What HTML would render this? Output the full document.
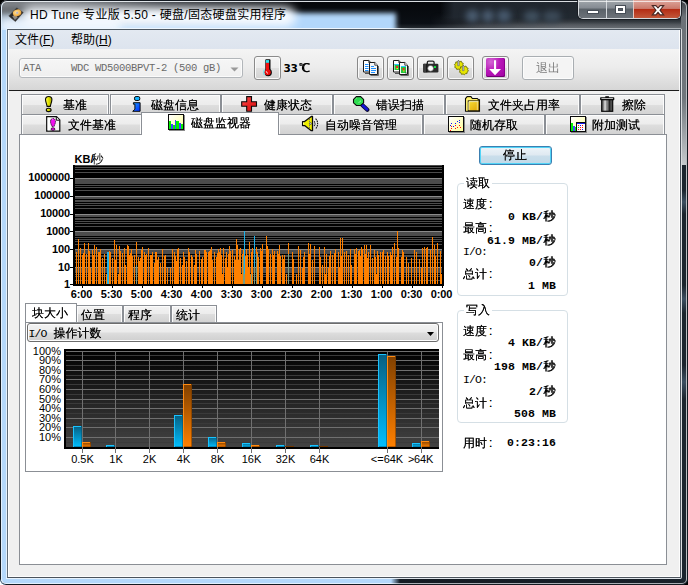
<!DOCTYPE html>
<html lang="zh-CN">
<head>
<meta charset="utf-8">
<title>HD Tune 专业版 5.50 - 硬盘/固态硬盘实用程序</title>
<style>
html,body{margin:0;padding:0;}
body{width:688px;height:585px;overflow:hidden;position:relative;background:#000;
 font-family:"Liberation Sans","Noto Sans CJK SC",sans-serif;font-size:12px;color:#000;}
.abs{position:absolute;}
.cjk{font-family:"Liberation Sans","WenQuanYi Zen Hei",sans-serif;font-size:12px;line-height:14px;white-space:nowrap;text-shadow:0 0 0 rgba(0,0,0,.85);}
.yh{font-family:"Liberation Sans","Noto Sans CJK SC",sans-serif;font-size:12px;line-height:14px;white-space:nowrap;}
.mono{font-family:"Liberation Mono","WenQuanYi Zen Hei",monospace;font-size:12px;line-height:14px;white-space:pre;}
/* ---- window frame ---- */
#frame{left:0;top:0;width:688px;height:585px;border-radius:7px 7px 6px 6px;overflow:hidden;background:#0b0f15;}
#client{left:8px;top:30px;width:672px;height:547px;background:#f0f0f0;}
/* ---- tabs ---- */
.tab{position:absolute;box-sizing:border-box;border:1px solid #8b8f95;border-bottom:none;
 background:linear-gradient(#f3f3f3 0%,#ececec 48%,#dedede 52%,#d2d2d2 100%);
 box-shadow:inset 1px 1px 0 #fcfcfc, inset -1px 0 0 #fcfcfc;}
.tab .ic{position:absolute;top:1px;}
.tab .tx{position:absolute;top:3px;}
.tbtn{position:absolute;box-sizing:border-box;width:27px;height:24px;top:56px;border:1px solid #8a8a8a;border-radius:3px;
 background:linear-gradient(#f4f4f4 0%,#ececec 48%,#dfdfdf 52%,#d3d3d3 100%);box-shadow:inset 0 0 0 1px #fafafa;}
.lab{position:absolute;font-family:"Liberation Sans","WenQuanYi Zen Hei",sans-serif;font-size:12px;line-height:14px;white-space:nowrap;text-shadow:0 0 0 rgba(0,0,0,.85);}
.val{position:absolute;font-family:"Liberation Mono","Noto Sans CJK SC",monospace;font-weight:bold;font-size:11.5px;line-height:14px;white-space:pre;text-align:right;letter-spacing:0.1px;}
.val b{font-family:"WenQuanYi Zen Hei",sans-serif;font-size:12px;letter-spacing:1px;font-weight:normal;text-shadow:1px 0 0 #000;position:relative;top:0px;}
.ax{position:absolute;font-family:"Liberation Sans",sans-serif;font-weight:bold;font-size:11px;line-height:12px;white-space:nowrap;letter-spacing:-.15px;}
.ax2{position:absolute;font-family:"Liberation Sans",sans-serif;font-size:11px;line-height:11px;white-space:nowrap;}
.grp{position:absolute;box-sizing:border-box;border:1px solid #d5dfe5;border-radius:4px;}
</style>
</head>
<body>
<div class="abs" style="left:0;top:577px;width:8px;height:8px;background:#fff;"></div>
<div id="frame" class="abs">
  <!-- title bar backdrop -->
  <div class="abs" id="tb-dark" style="left:0;top:0;width:688px;height:30px;background:linear-gradient(#05070a 0%,#0b0f15 78%,#23282e 92%,#3a3f45 100%);"></div>
  <div class="abs" style="left:430px;top:12px;width:258px;height:17px;background:linear-gradient(180deg,rgba(110,115,121,0) 0,rgba(106,111,117,.5) 50%,rgba(110,115,121,.95) 100%);-webkit-mask-image:linear-gradient(90deg,transparent 0,rgba(0,0,0,.6) 50px,#000 130px);"></div>
  <div class="abs" style="left:440px;top:2px;width:241px;height:22px;background:linear-gradient(90deg,rgba(34,41,49,0) 0,rgba(34,41,49,.95) 14px,rgba(34,41,49,.95) 100%);-webkit-mask-image:linear-gradient(180deg,#000 0,#000 70%,transparent 100%);"></div>
  <div class="abs" style="left:466px;top:10px;width:13px;height:12px;border-radius:5px;background:#4a5c70;filter:blur(3px);"></div>
  <div class="abs" style="left:482px;top:10px;width:12px;height:12px;border-radius:5px;background:#4a5c70;filter:blur(3px);"></div>
  <div class="abs" style="left:497px;top:10px;width:14px;height:12px;border-radius:5px;background:#46586c;filter:blur(3px);"></div>
  <div class="abs" style="left:524px;top:11px;width:16px;height:11px;border-radius:5px;background:#40505f;filter:blur(3px);"></div>
  <div class="abs" style="left:543px;top:11px;width:18px;height:11px;border-radius:5px;background:#3c4a58;filter:blur(3px);"></div>
  <div class="abs" id="tb-blue" style="left:-12px;top:13px;width:408px;height:24px;background:#b2d7fb;filter:blur(2.5px);"></div>
  <div class="abs" id="tb-gray" style="left:-6px;top:-6px;width:300px;height:36px;background:linear-gradient(90deg,#7d8186 0,#75797e 25%,rgba(70,74,80,.75) 55%,rgba(20,24,30,0) 100%);-webkit-mask-image:linear-gradient(180deg,#000 0,#000 30%,rgba(0,0,0,.7) 55%,transparent 92%);mask-image:linear-gradient(180deg,#000 0,#000 30%,rgba(0,0,0,.7) 55%,transparent 92%);filter:blur(2px);"></div>
  <div class="abs" id="tb-glow" style="left:22px;top:7px;width:274px;height:20px;border-radius:10px;background:#f6faff;filter:blur(5px);"></div>
  <div class="abs" id="tb-glow2" style="left:0px;top:18px;width:120px;height:14px;background:#f3f8fe;filter:blur(4px);opacity:.9"></div>
  <!-- left fill -->
  <div class="abs" style="left:0;top:30px;width:7px;height:555px;background:#b4d8fb;"></div>
  <!-- bottom fill -->
  <div class="abs" style="left:0;top:578px;width:688px;height:7px;background:linear-gradient(90deg,#b4d8fb 0,#b4d8fb 391px,#141b23 400px,#19212a 100%);"></div>
  <!-- right fill -->
  <div class="abs" style="left:681px;top:20px;width:7px;height:565px;background:#1b242d;"></div>
  <div class="abs" style="left:681px;top:2px;width:7px;height:163px;background:linear-gradient(180deg,#3c4147 0,#6b7177 14px,#70767c 96px,#9da2a7 131px,#c5c9cc 163px);"></div>
  <div class="abs" style="left:682px;top:190px;width:4px;height:24px;background:linear-gradient(180deg,rgba(70,90,110,0),rgba(70,90,110,.8) 50%,rgba(70,90,110,0));"></div>
  <div class="abs" style="left:682px;top:285px;width:4px;height:28px;background:linear-gradient(180deg,rgba(70,90,110,0),rgba(70,90,110,.8) 50%,rgba(70,90,110,0));"></div>
  <div class="abs" style="left:682px;top:365px;width:4px;height:34px;background:linear-gradient(180deg,rgba(70,90,110,0),rgba(70,90,110,.8) 50%,rgba(70,90,110,0));"></div>
  <!-- rings -->
  <div class="abs" style="left:0;top:0;width:688px;height:585px;box-sizing:border-box;border:1px solid #141a21;border-radius:7px 7px 6px 6px;"></div>
  <div class="abs" style="left:1px;top:1px;width:686px;height:583px;box-sizing:border-box;border:1px solid;border-color:rgba(236,240,244,.92) #b9bdc1 #a8adb3 #e2f0fd;border-radius:6px 6px 5px 5px;"></div>
  <div class="abs" style="left:1px;top:560px;width:400px;height:24px;box-sizing:border-box;border:1px solid #e2f0fd;border-top:none;border-right:none;border-radius:0 0 0 5px;-webkit-mask-image:linear-gradient(90deg,#000 0,#000 390px,transparent 399px);"></div>
  <div class="abs" style="left:6px;top:28px;width:676px;height:551px;box-sizing:border-box;border:1px solid;border-color:transparent #d9dcdf #dfe4e9 #e6f2fd;border-radius:2px;"></div>
  <div class="abs" style="left:6px;top:560px;width:394px;height:19px;box-sizing:border-box;border-bottom:1px solid #e6f2fd;-webkit-mask-image:linear-gradient(90deg,#000 0,#000 385px,transparent 394px);"></div>
  <!-- bottom of title bar highlight -->
  <div class="abs" style="left:7px;top:28px;width:674px;height:1px;background:linear-gradient(90deg,#eef6fe 0,#eef6fe 57%,#aab0b6 60%,#aab0b6 100%);"></div>
  <div class="abs" style="left:7px;top:29px;width:674px;height:549px;box-sizing:border-box;border:1px solid;border-color:#4f5963 #4d555e #4b535c #5f6b76;"></div>
  <!-- title icon + text -->
  <svg class="abs" style="left:8px;top:6px" width="17" height="17" viewBox="0 0 17 17">
    <defs><radialGradient id="pl" cx=".45" cy=".4" r=".7"><stop offset="0" stop-color="#ffe8a8"/><stop offset=".55" stop-color="#f5b955"/><stop offset="1" stop-color="#d98f2e"/></radialGradient></defs>
    <polygon points="8.700,1.900 15.200,6.500 7.400,15.500 .8,10.000" fill="#2b2a29" stroke="#3f3e3c" stroke-width=".6" stroke-linejoin="round"/>
    <polygon points="4.200,10.200 7.600,8.600 9.700,11.600 6.900,14.000" fill="#8e8a84"/>
    <ellipse cx="9.100" cy="6.900" rx="4.300" ry="3.300" fill="url(#pl)" transform="rotate(-18 9.100 6.900)"/>
    <circle cx="9.200" cy="6.800" r="1.150" fill="#b9b3c4"/>
  </svg>
  <div class="abs yh" id="title" style="left:30px;top:8px;font-size:12px;line-height:14px;color:#000;letter-spacing:.3px;">HD Tune 专业版 5.50 - 硬盘/固态硬盘实用程序</div>
  <!-- caption buttons -->
  <div class="abs" id="capbtns" style="left:578px;top:0;width:103px;height:19px;box-sizing:border-box;border:1px solid #d5d9dd;border-top:none;border-radius:0 0 5px 5px;overflow:hidden;box-shadow:0 0 0 1px rgba(20,24,30,.8);">
    <div class="abs" style="left:0;top:0;width:27px;height:18px;background:linear-gradient(#a2a8ad 0,#858b92 45%,#5a6168 50%,#6c7279 100%);border-right:1px solid #d5d9dd;"></div>
    <div class="abs" style="left:28px;top:0;width:26px;height:18px;background:linear-gradient(#a2a8ad 0,#858b92 45%,#5a6168 50%,#6c7279 100%);border-right:1px solid #e5c4bd;"></div>
    <div class="abs" style="left:55px;top:0;width:46px;height:18px;background:linear-gradient(#dea79d 0,#cb7a6c 47%,#b42c14 52%,#c2573a 100%);"></div>
    <div class="abs" style="left:0;top:1px;width:101px;height:1px;background:rgba(255,255,255,.7);"></div>
    <!-- glyphs -->
    <div class="abs" style="left:9px;top:11px;width:10px;height:2px;background:#fff;box-shadow:0 0 0 1px #474e57;"></div>
    <div class="abs" style="left:37px;top:6px;width:5px;height:3px;border:2px solid #fff;box-shadow:0 0 0 1px #474e57, inset 0 0 0 1px #474e57;"></div>
    <svg class="abs" style="left:71px;top:4px" width="16" height="13" viewBox="0 0 16 13"><path d="M2.300 1.600 L5.900 1.600 L8 4.000 L10.100 1.600 L13.700 1.600 L10 6.200 L13.700 10.900 L10.100 10.900 L8 8.300 L5.900 10.900 L2.300 10.900 L6 6.200 Z" fill="#fff" stroke="#4a2824" stroke-width="1.100"/></svg>
  </div>
</div>

<div id="client" class="abs">
  <!-- menu bar -->
  <div class="abs" style="left:0;top:0;width:672px;height:19px;background:linear-gradient(#e3e9f1,#dde4ee);"></div>
  <div class="abs yh" style="left:7px;top:3px;">文件(<u>F</u>)</div>
  <div class="abs yh" style="left:63px;top:3px;">帮助(<u>H</u>)</div>
  <!-- toolbar -->
  <div class="abs" style="left:0;top:19px;width:672px;height:41px;background:linear-gradient(#f4f4f4 0,#ececec 45%,#d6d6d6 100%);"></div>
  <div class="abs" style="left:0;top:60px;width:672px;height:1px;background:#1c1c1c;"></div>
  <div class="abs" style="left:0;top:0;width:672px;height:547px;box-sizing:border-box;border:1px solid rgba(255,255,255,.85);border-top:none;"></div>
</div>

<!-- ============ toolbar widgets (page coords) ============ -->
<div class="abs" style="left:19px;top:58px;width:224px;height:20px;box-sizing:border-box;border:1px solid #b2b6ba;border-radius:3px;background:linear-gradient(#f6f6f6,#efefef);box-shadow:inset 0 0 0 1px #fbfbfb;"></div>
<div class="abs mono" style="left:23px;top:61px;color:#6a6a6a;letter-spacing:-.3px;font-size:10.5px;">ATA     WDC WD5000BPVT-2 (500 gB)</div>
<svg class="abs" style="left:230px;top:67px" width="9" height="5"><polygon points="0.5,0.5 8.5,0.5 4.5,4.5" fill="#9a9a9a"/></svg>

<div class="tbtn" style="left:254px;"></div>
<svg class="abs" style="left:262px;top:58px" width="12" height="20" viewBox="0 0 12 20">
  <rect x="3.300" y="1.200" width="5.200" height="12.500" rx=".8" fill="#0a0a0a"/>
  <circle cx="6.200" cy="14.500" r="3.700" fill="#0a0a0a"/>
  <path d="M2.600 11.600q-1.700 2.700 0 5.400" stroke="#7fdde6" stroke-width="1.500" fill="none"/>
  <rect x="3.900" y="2.100" width="3.200" height="2.800" fill="#2fe2f0"/>
  <rect x="3.900" y="4.900" width="3.200" height="8.500" fill="#f21010"/>
  <circle cx="5.700" cy="14.300" r="3.050" fill="#ea0c0c"/>
  <path d="M4.300 13.300q.1 1.600 1.600 2" stroke="#fff" stroke-width=".9" fill="none"/>
</svg>
<div class="abs" style="left:283.500px;top:61px;font-weight:bold;font-size:10.5px;line-height:14px;font-family:'DejaVu Sans','WenQuanYi Zen Hei',sans-serif;letter-spacing:-.3px;white-space:nowrap;">33<span style="font-family:'WenQuanYi Zen Hei',sans-serif;font-weight:normal;font-size:12px;text-shadow:1px 0 0 #000;letter-spacing:0;margin-left:1px;position:relative;top:-.500px">℃</span></div>

<div class="tbtn" style="left:357px;"></div>
<svg class="abs" style="left:362px;top:59px" width="18" height="18" viewBox="0 0 18 18">
  <path d="M1.500 1.500h5.300l2.200 2.200v9.300h-7.500z" fill="#fff" stroke="#1a1a1a" stroke-width="1"/>
  <path d="M6.800 1.500v2.200h2.200" fill="none" stroke="#1a1a1a" stroke-width=".8"/>
  <path d="M3 5.500h3.500M3 7.500h3.500M3 9.500h3.500M3 11.500h3.500" stroke="#1e90ff" stroke-width="1"/>
  <path d="M9 14.500h-6" stroke="#555" stroke-width="1"/>
  <path d="M7.500 3.500h5.300l2.700 2.700v9.300h-8z" fill="#f6f6f6" stroke="#1a1a1a" stroke-width="1"/>
  <path d="M12.800 3.500v2.700h2.700" fill="#fff" stroke="#1a1a1a" stroke-width=".8"/>
  <path d="M9 7.500h3M9 9.500h5M9 11.500h5M9 13.500h4" stroke="#1e90ff" stroke-width="1"/>
  <path d="M16.500 7v9.500h-8" stroke="#6a6a6a" stroke-width="1" fill="none"/>
</svg>
<div class="tbtn" style="left:387px;"></div>
<svg class="abs" style="left:392px;top:59px" width="18" height="18" viewBox="0 0 18 18">
  <path d="M1.500 1.500h5.300l2.200 2.200v9.300h-7.500z" fill="#fff" stroke="#1a1a1a" stroke-width="1"/>
  <path d="M6.800 1.500v2.200h2.200" fill="none" stroke="#1a1a1a" stroke-width=".8"/>
  <rect x="2.500" y="5" width="4.500" height="6" fill="#22c83c"/><rect x="2.500" y="5" width="4.500" height="1" fill="#29c5ff"/><rect x="4" y="7" width="2" height="2" fill="#f03020"/><rect x="4.500" y="9" width="1.500" height="1" fill="#ffe020"/>
  <path d="M9 14.500h-6" stroke="#555" stroke-width="1"/>
  <path d="M7.500 3.500h5.300l2.700 2.700v9.300h-8z" fill="#f6f6f6" stroke="#1a1a1a" stroke-width="1"/>
  <path d="M12.800 3.500v2.700h2.700" fill="#fff" stroke="#1a1a1a" stroke-width=".8"/>
  <rect x="9" y="7" width="5" height="7" fill="#22c83c"/><rect x="9" y="7" width="5" height="1" fill="#29c5ff"/><rect x="10.500" y="9" width="2" height="2.500" fill="#f03020"/><rect x="11" y="11.500" width="1.500" height="1" fill="#ffe020"/><rect x="13.500" y="13.500" width="1" height="1" fill="#111"/>
  <path d="M16.500 7v9.500h-8" stroke="#6a6a6a" stroke-width="1" fill="none"/>
</svg>
<div class="tbtn" style="left:417px;"></div>
<svg class="abs" style="left:422px;top:60px" width="18" height="14" viewBox="0 0 18 14">
  <path d="M5.300 4V2.500c0-.8.600-1.400 1.400-1.400h4c.8 0 1.400.6 1.400 1.400V4" fill="#e8e8e8" stroke="#222" stroke-width="1.300"/>
  <rect x="1" y="3.700" width="15.400" height="8.700" rx="1.200" fill="#2b2b2b"/>
  <rect x="1" y="3.700" width="3.300" height="8.700" rx="1" fill="#3c3c3c"/>
  <rect x="4.300" y="3.700" width="1" height="8.700" fill="#111"/>
  <circle cx="8.600" cy="8.300" r="2.900" fill="#fdfdfd" stroke="#555" stroke-width=".6"/>
  <rect x="12" y="6" width="2" height="2" rx=".5" fill="#10f040"/>
</svg>
<div class="tbtn" style="left:447px;"></div>
<svg class="abs" style="left:452px;top:59px" width="18" height="18" viewBox="0 0 20 20">
  <g fill="#e6e600" stroke="#6a6a00" stroke-width=".9">
   <path d="M7.100 1.800l1.500 1.100 1.700-.5.600 1.700 1.700.7-.6 1.700 1 1.500-1.500 1-.1 1.800-1.800 0-1.100 1.400-1.500-1-1.700.5-.6-1.700-1.700-.7.600-1.700-1-1.500 1.500-1 .1-1.800 1.800 0z"/>
   <path d="M12.400 7.200l1.500 1.100 1.700-.5.600 1.700 1.700.7-.6 1.700 1 1.500-1.500 1-.1 1.800-1.800 0-1.100 1.400-1.500-1-1.700.5-.6-1.700-1.700-.7.600-1.700-1-1.500 1.500-1 .1-1.800 1.800 0z"/>
  </g>
  <path d="M6.300 7.500V2.800l.9-1.600.9 1.600v4.700z" fill="#b8b8c8" stroke="#555" stroke-width=".5"/>
  <path d="M11.600 13V8.300l.9-1.600.9 1.600V13z" fill="#b8b8c8" stroke="#555" stroke-width=".5"/>
</svg>
<div class="tbtn" style="left:482px;"></div>
<div class="abs" style="left:486px;top:58px;width:19px;height:19px;border-radius:2px;background:radial-gradient(circle at 25% 20%,#d468d4 0,#b818b8 45%,#a000a2 100%);box-shadow:inset 0 -1px 0 #6e0070, inset -1px 0 0 #8a008c;"></div>
<svg class="abs" style="left:486px;top:58px" width="19" height="19" viewBox="0 0 19 19"><path d="M8 2.200h2.100v8.800h4.900L9.050 17.200 3.100 11h4.900z" fill="#fff"/></svg>

<div class="abs" style="left:522px;top:56px;width:52px;height:24px;box-sizing:border-box;border:1px solid #a9aeb2;border-radius:3px;background:#f4f4f4;box-shadow:inset 0 0 0 1px #fcfcfc;"></div>
<div class="abs cjk" style="left:536px;top:61px;color:#7c7c7c;text-shadow:none;">退出</div>

<!-- ============ main tab control ============ -->
<!-- pane -->
<div class="abs" style="left:19px;top:134px;width:648px;height:431px;box-sizing:border-box;border:1px solid #8b8f95;background:#fff;"></div>
<!-- row 1 -->
<div class="tab" style="left:21px;top:94px;width:88px;height:21px;"></div>
<div class="tab" style="left:110px;top:94px;width:111px;height:21px;"></div>
<div class="tab" style="left:221px;top:94px;width:112px;height:21px;"></div>
<div class="tab" style="left:333px;top:94px;width:112px;height:21px;"></div>
<div class="tab" style="left:445px;top:94px;width:135px;height:21px;"></div>
<div class="tab" style="left:580px;top:94px;width:85px;height:21px;"></div>
<!-- row 2 -->
<div class="tab" style="left:21px;top:114px;width:121px;height:20px;"></div>
<div class="tab" style="left:278px;top:114px;width:145px;height:20px;"></div>
<div class="tab" style="left:423px;top:114px;width:122px;height:20px;"></div>
<div class="tab" style="left:545px;top:114px;width:120px;height:20px;"></div>
<!-- selected -->
<div class="abs" style="left:141px;top:112px;width:138px;height:23px;box-sizing:border-box;border:1px solid #8b8f95;border-bottom:none;background:#fff;"></div>

<!-- tab labels -->
<div class="abs cjk" style="left:63px;top:98px;">基准</div>
<div class="abs cjk" style="left:151px;top:98px;">磁盘信息</div>
<div class="abs cjk" style="left:264px;top:98px;">健康状态</div>
<div class="abs cjk" style="left:376px;top:98px;">错误扫描</div>
<div class="abs cjk" style="left:488px;top:98px;">文件夹占用率</div>
<div class="abs cjk" style="left:622px;top:98px;">擦除</div>
<div class="abs cjk" style="left:68px;top:118px;">文件基准</div>
<div class="abs cjk" style="left:191px;top:116px;">磁盘监视器</div>
<div class="abs cjk" style="left:325px;top:118px;">自动噪音管理</div>
<div class="abs cjk" style="left:470px;top:118px;">随机存取</div>
<div class="abs cjk" style="left:592px;top:118px;">附加测试</div>

<!-- tab icons -->
<!-- benchmark: yellow ! -->
<svg class="abs" style="left:42px;top:95px" width="14" height="18" viewBox="0 0 14 18">
  <defs><linearGradient id="yl" x1="0" x2="1"><stop offset="0" stop-color="#ffff66"/><stop offset=".45" stop-color="#e6e600"/><stop offset="1" stop-color="#a8a800"/></linearGradient></defs>
  <path d="M3.500 4.600c0-2.200 1.400-3.100 3.200-3.100s3.200.9 3.200 3.100c0 2.600-1.300 4.300-1.600 6.800h-3.200c-.3-2.500-1.600-4.200-1.600-6.800z" fill="url(#yl)" stroke="#0a0a00" stroke-width="1.100"/>
  <ellipse cx="6.700" cy="14.900" rx="2.400" ry="1.700" fill="url(#yl)" stroke="#0a0a00" stroke-width="1.100"/>
</svg>
<!-- info: blue i -->
<svg class="abs" style="left:130px;top:95px" width="14" height="18" viewBox="0 0 14 18">
  <defs><linearGradient id="bl" x1="0" y1="0" x2="1" y2="1"><stop offset="0" stop-color="#1aa0ff"/><stop offset="1" stop-color="#0028ff"/></linearGradient></defs>
  <rect x="4.500" y="1.500" width="5.300" height="4" rx="1.600" fill="#14b4ff" stroke="#0a0a0a" stroke-width="1"/>
  <path d="M3.400 7.700H10.100V16.300H2.700L4.900 14.300V9.200H3.400Z" fill="url(#bl)" stroke="#0a0a0a" stroke-width="1"/>
</svg>
<!-- health: red cross -->
<svg class="abs" style="left:241px;top:96px" width="17" height="17" viewBox="0 0 17 17">
  <defs><linearGradient id="rd" x1="0" y1="0" x2="1" y2="1"><stop offset="0" stop-color="#ff5a5a"/><stop offset=".5" stop-color="#ea2424"/><stop offset="1" stop-color="#d01414"/></linearGradient></defs>
  <path d="M5.700 .6h4.800v5.100h5.000v4.500h-5.000v5.100h-4.800v-5.100h-5.000v-4.500h5.000z" fill="url(#rd)" stroke="#0a0a0a" stroke-width="1.100"/>
</svg>
<!-- error scan: magnifier -->
<svg class="abs" style="left:352px;top:95px" width="18" height="18" viewBox="0 0 18 18">
  <path d="M10.500 10.300 L15.300 14.800" stroke="#0a0a30" stroke-width="4.200" stroke-linecap="round"/>
  <path d="M10.300 10.000 L15.000 14.400" stroke="#1414d8" stroke-width="2.600" stroke-linecap="round"/>
  <polygon points="4.400,1.600 8.600,1.600 11.600,4.400 11.600,7.800 8.600,10.500 4.400,10.500 1.500,7.800 1.500,4.400" fill="#2fdc50" stroke="#0a0a0a" stroke-width="1.100"/>
  <path d="M3.700 3.900l1.100-1.100M6.600 7.900l2.400-2.400" stroke="#d8ffd8" stroke-width=".9" stroke-dasharray=".8 .5"/>
</svg>
<!-- folder usage -->
<svg class="abs" style="left:464px;top:95px" width="18" height="18" viewBox="0 0 18 18">
  <defs><linearGradient id="fo" x1="0" y1="0" x2="1" y2="1"><stop offset="0" stop-color="#f6e03a"/><stop offset="1" stop-color="#dfa400"/></linearGradient></defs>
  <path d="M1.500 3.700L3.200 1.600H6.900L8.300 3.500H13.300L14.600 4.900H15.500V16.200H1.500Z" fill="#f2dc30" stroke="#0a0a0a" stroke-width="1.100"/>
  <path d="M2.200 4.200L3.500 2.400H6.500L7.900 4.300H13L13.800 5.400H4V15.500H2.200Z" fill="#fff27a"/>
  <rect x="4.200" y="5.900" width="11" height="9.900" fill="url(#fo)" stroke="#0a0a0a" stroke-width=".9"/>
  <path d="M4.900 15.200V6.600H14.400" stroke="#fffbd0" stroke-width=".8" fill="none"/>
  <path d="M13.300 6.600V15.200" stroke="#f7efb0" stroke-width=".7"/>
</svg>
<!-- erase: trash can -->
<svg class="abs" style="left:599px;top:95px" width="17" height="18" viewBox="0 0 17 18">
  <defs><linearGradient id="tr" x1="0" x2="1"><stop offset="0" stop-color="#4a4a4a"/><stop offset=".22" stop-color="#9a9a9a"/><stop offset=".3" stop-color="#f2f2f2"/><stop offset=".4" stop-color="#9c9c9c"/><stop offset=".55" stop-color="#7a7a7a"/><stop offset=".72" stop-color="#1c1c1c"/><stop offset=".85" stop-color="#5a5a5a"/><stop offset="1" stop-color="#2a2a2a"/></linearGradient></defs>
  <rect x="6.300" y="1.200" width="3.600" height="1.800" fill="#111"/>
  <rect x="1.100" y="2.300" width="14.200" height="2.900" rx=".6" fill="#0c0c0c"/>
  <rect x="2.300" y="2.900" width="11.800" height="1.100" rx=".5" fill="#b8b8b8"/>
  <rect x="2.700" y="4.700" width="11" height="11.600" fill="url(#tr)" stroke="#0a0a0a" stroke-width="1.200"/>
</svg>
<!-- file benchmark: doc with magenta ! -->
<svg class="abs" style="left:46px;top:116px" width="16" height="17" viewBox="0 0 16 17">
  <path d="M.7 .7h9.800l3.300 3.300v11.200h-13.100z" fill="#f4f4f4" stroke="#0a0a0a" stroke-width="1.200"/>
  <path d="M1.800 1.800h2v12.500h-2z" fill="#fff"/>
  <path d="M10.300 .9v3.300h3.300" fill="#fff" stroke="#0a0a0a" stroke-width="1"/>
  <path d="M4.500 5.700c0-2.100 1-3.200 2.500-3.200s2.500 1.100 2.500 3.200c0 1.600-.9 3-1.400 4.700h-2.200c-.5-1.700-1.400-3.100-1.400-4.700z" fill="#ee10ee" stroke="#26002a" stroke-width=".8" stroke-dasharray="1.500 .6"/>
  <ellipse cx="7" cy="13.100" rx="1.900" ry="1.300" fill="#ee10ee" stroke="#26002a" stroke-width=".8"/>
  <path d="M6.200 4.200c.2-.6.600-.9 1-.9" stroke="#ff9cff" stroke-width=".9" fill="none"/>
</svg>
<!-- disk monitor: mini chart -->
<svg class="abs" style="left:168px;top:114px" width="17" height="17" viewBox="0 0 17 17" shape-rendering="crispEdges">
  <defs><linearGradient id="ly" x1="0" y1="0" x2="1" y2="1"><stop offset="0" stop-color="#ffffff"/><stop offset="1" stop-color="#ffff9a"/></linearGradient></defs>
  <rect x="1" y="1" width="16" height="16" fill="#8a8a8a"/>
  <rect x="0" y="0" width="16" height="16" fill="#0a0a0a"/>
  <rect x="1" y="1" width="14" height="14" fill="url(#ly)"/>
  <rect x="1" y="7" width="2" height="8" fill="#00f400"/><rect x="3" y="10" width="2" height="5" fill="#4444ff"/>
  <rect x="5" y="11" width="2" height="4" fill="#00f400"/><rect x="7" y="6" width="1" height="9" fill="#4444ff"/>
  <rect x="8" y="7" width="3" height="8" fill="#00f400"/><rect x="11" y="9" width="2" height="6" fill="#4444ff"/>
  <rect x="13" y="10" width="2" height="5" fill="#00f400"/>
</svg>
<!-- AAM: speaker -->
<svg class="abs" style="left:301px;top:115px" width="19" height="18" viewBox="0 0 19 18">
  <path d="M1.600 6.600H3.600L10.300 1.500H11.500V15.700H10.300L3.600 10.600H1.600Z" fill="#eeee00" stroke="#0a0a0a" stroke-width="1.300" stroke-linejoin="round"/>
  <path d="M2.600 7.500v2.200" stroke="#ffff9a" stroke-width="1"/>
  <path d="M8.500 3.800v9.600" stroke="#6a6a6a" stroke-width=".9" stroke-dasharray="1.200 .8"/>
  <circle cx="9.400" cy="8.600" r="1" fill="#d8d8d8" stroke="#333" stroke-width=".6"/>
  <path d="M13.200 6.300c1.100 1.300 1.100 3.400 0 4.700" stroke="#0a0a0a" stroke-width="1.100" fill="none" stroke-dasharray="1.400 .7"/>
  <path d="M14.600 3.600c2.700 2.800 2.700 7.300 0 10.100" stroke="#0a0a0a" stroke-width="1.100" fill="none" stroke-dasharray="1.600 .7"/>
</svg>
<!-- random access: scatter -->
<svg class="abs" style="left:448px;top:116px" width="17" height="17" viewBox="0 0 17 17" shape-rendering="crispEdges">
  <rect x="1" y="1" width="16" height="16" fill="#8a8a8a"/>
  <rect x="0" y="0" width="16" height="16" fill="#0a0a0a"/><rect x="1" y="1" width="14" height="14" fill="url(#ly)"/>
  <g fill="#1010ff"><rect x="3" y="7" width="1" height="1"/><rect x="7" y="7" width="1" height="1"/><rect x="9" y="5" width="1" height="1"/><rect x="11" y="4" width="1" height="1"/><rect x="11" y="6" width="1" height="1"/><rect x="2" y="9" width="1" height="1"/><rect x="5" y="10" width="1" height="1"/></g>
  <g fill="#ff1010"><rect x="3" y="10" width="1" height="1"/><rect x="7" y="9" width="1" height="1"/><rect x="11" y="9" width="1" height="1"/><rect x="3" y="12" width="1" height="1"/><rect x="7" y="12" width="1" height="1"/><rect x="9" y="11" width="1" height="1"/><rect x="12" y="11" width="1" height="1"/><rect x="2" y="14" width="1" height="1"/></g>
</svg>
<!-- extra tests -->
<svg class="abs" style="left:570px;top:116px" width="17" height="17" viewBox="0 0 17 17" shape-rendering="crispEdges">
  <rect x="1" y="1" width="16" height="16" fill="#8a8a8a"/>
  <rect x="0" y="0" width="16" height="16" fill="#0a0a0a"/><rect x="1" y="1" width="14" height="14" fill="url(#ly)"/>
  <rect x="1" y="7" width="2" height="8" fill="#00f400"/><rect x="3" y="10" width="2" height="5" fill="#4444ff"/><rect x="5" y="11" width="1" height="4" fill="#00f400"/>
  <rect x="6" y="6" width="10" height="10" fill="#0a0a0a"/>
  <rect x="7" y="7" width="8" height="8" fill="#fafafa"/>
  <rect x="7" y="7" width="8" height="1" fill="#1818e8"/>
  <g fill="#ff1010"><rect x="8" y="9" width="1" height="1"/><rect x="12" y="9" width="1" height="1"/><rect x="10" y="11" width="1" height="1"/><rect x="12" y="11" width="1" height="1"/><rect x="8" y="13" width="1" height="1"/><rect x="10" y="13" width="1" height="1"/></g>
  <g fill="#1010ff"><rect x="10" y="9" width="1" height="1"/><rect x="12" y="13" width="1" height="1"/></g>
  <rect x="8" y="11" width="1" height="1" fill="#10c010"/>
</svg>

<!-- ============ chart 1 ============ -->
<svg class="abs" style="left:0;top:0" width="688" height="585" shape-rendering="crispEdges">
<rect x="73" y="165" width="371" height="121" fill="#000"/>
<rect x="75" y="165" width="367" height="1" fill="#4c4c4c"/>
<rect x="75" y="167" width="367" height="1" fill="#4c4c4c"/>
<rect x="75" y="169" width="367" height="1" fill="#4c4c4c"/>
<rect x="75" y="172" width="367" height="1" fill="#4c4c4c"/>
<rect x="75" y="178" width="367" height="1" fill="#8a8a8a"/>
<rect x="75" y="179" width="367" height="1" fill="#4c4c4c"/>
<rect x="75" y="180" width="367" height="1" fill="#4c4c4c"/>
<rect x="75" y="181" width="367" height="1" fill="#4c4c4c"/>
<rect x="75" y="182" width="367" height="1" fill="#4c4c4c"/>
<rect x="75" y="183" width="367" height="1" fill="#4c4c4c"/>
<rect x="75" y="185" width="367" height="1" fill="#4c4c4c"/>
<rect x="75" y="187" width="367" height="1" fill="#4c4c4c"/>
<rect x="75" y="190" width="367" height="1" fill="#4c4c4c"/>
<rect x="75" y="196" width="367" height="1" fill="#8a8a8a"/>
<rect x="75" y="197" width="367" height="1" fill="#4c4c4c"/>
<rect x="75" y="198" width="367" height="1" fill="#4c4c4c"/>
<rect x="75" y="200" width="367" height="1" fill="#4c4c4c"/>
<rect x="75" y="201" width="367" height="1" fill="#4c4c4c"/>
<rect x="75" y="203" width="367" height="1" fill="#4c4c4c"/>
<rect x="75" y="205" width="367" height="1" fill="#4c4c4c"/>
<rect x="75" y="208" width="367" height="1" fill="#4c4c4c"/>
<rect x="75" y="214" width="367" height="1" fill="#8a8a8a"/>
<rect x="75" y="215" width="367" height="1" fill="#4c4c4c"/>
<rect x="75" y="216" width="367" height="1" fill="#4c4c4c"/>
<rect x="75" y="218" width="367" height="1" fill="#4c4c4c"/>
<rect x="75" y="219" width="367" height="1" fill="#4c4c4c"/>
<rect x="75" y="221" width="367" height="1" fill="#4c4c4c"/>
<rect x="75" y="223" width="367" height="1" fill="#4c4c4c"/>
<rect x="75" y="226" width="367" height="1" fill="#4c4c4c"/>
<rect x="75" y="231" width="367" height="1" fill="#8a8a8a"/>
<rect x="75" y="232" width="367" height="1" fill="#4c4c4c"/>
<rect x="75" y="233" width="367" height="1" fill="#4c4c4c"/>
<rect x="75" y="234" width="367" height="1" fill="#4c4c4c"/>
<rect x="75" y="235" width="367" height="1" fill="#4c4c4c"/>
<rect x="75" y="237" width="367" height="1" fill="#4c4c4c"/>
<rect x="75" y="239" width="367" height="1" fill="#4c4c4c"/>
<rect x="75" y="241" width="367" height="1" fill="#4c4c4c"/>
<rect x="75" y="244" width="367" height="1" fill="#4c4c4c"/>
<rect x="75" y="249" width="367" height="1" fill="#8a8a8a"/>
<rect x="75" y="250" width="367" height="1" fill="#4c4c4c"/>
<rect x="75" y="251" width="367" height="1" fill="#4c4c4c"/>
<rect x="75" y="252" width="367" height="1" fill="#4c4c4c"/>
<rect x="75" y="253" width="367" height="1" fill="#4c4c4c"/>
<rect x="75" y="255" width="367" height="1" fill="#4c4c4c"/>
<rect x="75" y="256" width="367" height="1" fill="#4c4c4c"/>
<rect x="75" y="259" width="367" height="1" fill="#4c4c4c"/>
<rect x="75" y="262" width="367" height="1" fill="#4c4c4c"/>
<rect x="75" y="267" width="367" height="1" fill="#8a8a8a"/>
<rect x="75" y="268" width="367" height="1" fill="#4c4c4c"/>
<rect x="75" y="269" width="367" height="1" fill="#4c4c4c"/>
<rect x="75" y="270" width="367" height="1" fill="#4c4c4c"/>
<rect x="75" y="271" width="367" height="1" fill="#4c4c4c"/>
<rect x="75" y="272" width="367" height="1" fill="#4c4c4c"/>
<rect x="75" y="274" width="367" height="1" fill="#4c4c4c"/>
<rect x="75" y="276" width="367" height="1" fill="#4c4c4c"/>
<rect x="75" y="280" width="367" height="1" fill="#4c4c4c"/>
<rect x="76" y="252" width="1" height="32" fill="#ff8000"/>
<rect x="78" y="239" width="1" height="45" fill="#ff8000"/>
<rect x="80" y="248" width="1" height="36" fill="#ff8000"/>
<rect x="82" y="255" width="1" height="29" fill="#ff8000"/>
<rect x="83" y="253" width="1" height="31" fill="#ff8000"/>
<rect x="84" y="243" width="1" height="41" fill="#ff8000"/>
<rect x="86" y="254" width="1" height="30" fill="#ff8000"/>
<rect x="88" y="243" width="1" height="41" fill="#ff8000"/>
<rect x="89" y="251" width="1" height="33" fill="#ff8000"/>
<rect x="90" y="268" width="1" height="16" fill="#ff8000"/>
<rect x="92" y="250" width="1" height="34" fill="#ff8000"/>
<rect x="93" y="255" width="1" height="29" fill="#ff8000"/>
<rect x="94" y="245" width="1" height="39" fill="#ff8000"/>
<rect x="96" y="247" width="1" height="37" fill="#ff8000"/>
<rect x="98" y="252" width="1" height="32" fill="#ff8000"/>
<rect x="99" y="252" width="1" height="32" fill="#ff8000"/>
<rect x="100" y="249" width="1" height="35" fill="#ff8000"/>
<rect x="102" y="258" width="1" height="26" fill="#ff8000"/>
<rect x="104" y="254" width="1" height="30" fill="#ff8000"/>
<rect x="106" y="274" width="1" height="10" fill="#ff8000"/>
<rect x="107" y="252" width="1" height="32" fill="#1fb2ea"/>
<rect x="108" y="252" width="1" height="32" fill="#1fb2ea"/>
<rect x="109" y="251" width="1" height="33" fill="#ff8000"/>
<rect x="110" y="252" width="1" height="32" fill="#ff8000"/>
<rect x="112" y="258" width="1" height="26" fill="#ff8000"/>
<rect x="114" y="240" width="1" height="44" fill="#ff8000"/>
<rect x="115" y="260" width="1" height="24" fill="#ff8000"/>
<rect x="116" y="245" width="1" height="39" fill="#ff8000"/>
<rect x="118" y="274" width="1" height="10" fill="#ff8000"/>
<rect x="119" y="246" width="1" height="38" fill="#ff8000"/>
<rect x="120" y="251" width="1" height="33" fill="#ff8000"/>
<rect x="122" y="253" width="1" height="31" fill="#ff8000"/>
<rect x="124" y="248" width="1" height="36" fill="#ff8000"/>
<rect x="125" y="265" width="1" height="19" fill="#ff8000"/>
<rect x="127" y="245" width="1" height="39" fill="#ff8000"/>
<rect x="128" y="246" width="1" height="38" fill="#ff8000"/>
<rect x="129" y="255" width="1" height="29" fill="#ff8000"/>
<rect x="130" y="253" width="1" height="31" fill="#ff8000"/>
<rect x="131" y="249" width="1" height="35" fill="#ff8000"/>
<rect x="132" y="256" width="1" height="28" fill="#ff8000"/>
<rect x="134" y="255" width="1" height="29" fill="#ff8000"/>
<rect x="136" y="242" width="1" height="23" fill="#ff8000"/>
<rect x="136" y="265" width="1" height="19" fill="#7d9d7d"/>
<rect x="138" y="257" width="1" height="27" fill="#ff8000"/>
<rect x="139" y="261" width="1" height="23" fill="#ff8000"/>
<rect x="140" y="258" width="1" height="26" fill="#ff8000"/>
<rect x="141" y="250" width="1" height="34" fill="#ff8000"/>
<rect x="142" y="247" width="1" height="37" fill="#ff8000"/>
<rect x="144" y="252" width="1" height="32" fill="#ff8000"/>
<rect x="145" y="255" width="1" height="29" fill="#ff8000"/>
<rect x="146" y="254" width="1" height="30" fill="#ff8000"/>
<rect x="148" y="248" width="1" height="36" fill="#ff8000"/>
<rect x="150" y="255" width="1" height="29" fill="#ff8000"/>
<rect x="151" y="255" width="1" height="29" fill="#ff8000"/>
<rect x="152" y="252" width="1" height="32" fill="#ff8000"/>
<rect x="154" y="263" width="1" height="21" fill="#ff8000"/>
<rect x="155" y="252" width="1" height="32" fill="#ff8000"/>
<rect x="156" y="252" width="1" height="32" fill="#ff8000"/>
<rect x="157" y="260" width="1" height="24" fill="#ff8000"/>
<rect x="158" y="257" width="1" height="27" fill="#ff8000"/>
<rect x="160" y="263" width="1" height="21" fill="#ff8000"/>
<rect x="162" y="249" width="1" height="35" fill="#ff8000"/>
<rect x="164" y="256" width="1" height="28" fill="#ff8000"/>
<rect x="165" y="255" width="1" height="29" fill="#ff8000"/>
<rect x="167" y="268" width="1" height="16" fill="#ff8000"/>
<rect x="170" y="268" width="1" height="16" fill="#ff8000"/>
<rect x="172" y="249" width="1" height="35" fill="#ff8000"/>
<rect x="174" y="252" width="1" height="32" fill="#ff8000"/>
<rect x="175" y="256" width="1" height="28" fill="#ff8000"/>
<rect x="176" y="261" width="1" height="23" fill="#ff8000"/>
<rect x="177" y="249" width="1" height="35" fill="#ff8000"/>
<rect x="178" y="248" width="1" height="36" fill="#ff8000"/>
<rect x="180" y="258" width="1" height="26" fill="#ff8000"/>
<rect x="182" y="265" width="1" height="19" fill="#ff8000"/>
<rect x="183" y="252" width="1" height="32" fill="#ff8000"/>
<rect x="184" y="257" width="1" height="27" fill="#ff8000"/>
<rect x="186" y="261" width="1" height="23" fill="#ff8000"/>
<rect x="188" y="248" width="1" height="36" fill="#ff8000"/>
<rect x="189" y="252" width="1" height="32" fill="#ff8000"/>
<rect x="191" y="255" width="1" height="29" fill="#ff8000"/>
<rect x="192" y="257" width="1" height="27" fill="#ff8000"/>
<rect x="194" y="265" width="1" height="19" fill="#ff8000"/>
<rect x="195" y="250" width="1" height="34" fill="#ff8000"/>
<rect x="196" y="254" width="1" height="30" fill="#ff8000"/>
<rect x="199" y="251" width="1" height="33" fill="#ff8000"/>
<rect x="201" y="259" width="1" height="25" fill="#ff8000"/>
<rect x="202" y="257" width="1" height="27" fill="#ff8000"/>
<rect x="204" y="250" width="1" height="34" fill="#ff8000"/>
<rect x="205" y="250" width="1" height="34" fill="#ff8000"/>
<rect x="206" y="252" width="1" height="32" fill="#ff8000"/>
<rect x="208" y="252" width="1" height="32" fill="#ff8000"/>
<rect x="209" y="251" width="1" height="33" fill="#ff8000"/>
<rect x="210" y="250" width="1" height="34" fill="#ff8000"/>
<rect x="211" y="247" width="1" height="37" fill="#ff8000"/>
<rect x="212" y="260" width="1" height="24" fill="#ff8000"/>
<rect x="214" y="252" width="1" height="32" fill="#ff8000"/>
<rect x="216" y="257" width="1" height="27" fill="#ff8000"/>
<rect x="217" y="253" width="1" height="31" fill="#ff8000"/>
<rect x="218" y="249" width="1" height="35" fill="#ff8000"/>
<rect x="219" y="252" width="1" height="32" fill="#ff8000"/>
<rect x="220" y="248" width="1" height="36" fill="#ff8000"/>
<rect x="221" y="255" width="1" height="29" fill="#ff8000"/>
<rect x="222" y="274" width="1" height="10" fill="#ff8000"/>
<rect x="223" y="248" width="1" height="36" fill="#ff8000"/>
<rect x="225" y="258" width="1" height="26" fill="#ff8000"/>
<rect x="226" y="252" width="1" height="32" fill="#ff8000"/>
<rect x="227" y="267" width="1" height="17" fill="#ff8000"/>
<rect x="228" y="254" width="1" height="30" fill="#ff8000"/>
<rect x="229" y="246" width="1" height="38" fill="#ff8000"/>
<rect x="230" y="251" width="1" height="33" fill="#ff8000"/>
<rect x="232" y="250" width="1" height="34" fill="#ff8000"/>
<rect x="234" y="256" width="1" height="28" fill="#ff8000"/>
<rect x="235" y="260" width="1" height="24" fill="#ff8000"/>
<rect x="236" y="239" width="1" height="45" fill="#ff8000"/>
<rect x="237" y="245" width="1" height="39" fill="#ff8000"/>
<rect x="238" y="260" width="1" height="24" fill="#ff8000"/>
<rect x="239" y="249" width="1" height="35" fill="#ff8000"/>
<rect x="240" y="248" width="1" height="36" fill="#ff8000"/>
<rect x="241" y="274" width="1" height="10" fill="#ff8000"/>
<rect x="242" y="254" width="1" height="30" fill="#ff8000"/>
<rect x="243" y="250" width="1" height="6" fill="#ff8000"/>
<rect x="243" y="256" width="1" height="28" fill="#7d9d7d"/>
<rect x="244" y="231" width="1" height="43" fill="#1fb2ea"/>
<rect x="244" y="274" width="1" height="10" fill="#7d9d7d"/>
<rect x="245" y="256" width="1" height="28" fill="#ff8000"/>
<rect x="246" y="249" width="1" height="35" fill="#ff8000"/>
<rect x="247" y="255" width="1" height="29" fill="#ff8000"/>
<rect x="248" y="267" width="1" height="17" fill="#ff8000"/>
<rect x="249" y="242" width="1" height="42" fill="#ff8000"/>
<rect x="250" y="274" width="1" height="10" fill="#ff8000"/>
<rect x="251" y="252" width="1" height="22" fill="#ff8000"/>
<rect x="251" y="274" width="1" height="10" fill="#7d9d7d"/>
<rect x="252" y="248" width="1" height="36" fill="#ff8000"/>
<rect x="254" y="236" width="1" height="31" fill="#1fb2ea"/>
<rect x="254" y="267" width="1" height="17" fill="#7d9d7d"/>
<rect x="256" y="247" width="1" height="7" fill="#ff8000"/>
<rect x="256" y="254" width="1" height="30" fill="#7d9d7d"/>
<rect x="257" y="252" width="1" height="32" fill="#ff8000"/>
<rect x="258" y="257" width="1" height="27" fill="#ff8000"/>
<rect x="260" y="248" width="1" height="36" fill="#ff8000"/>
<rect x="261" y="251" width="1" height="33" fill="#ff8000"/>
<rect x="262" y="244" width="1" height="40" fill="#ff8000"/>
<rect x="266" y="236" width="1" height="48" fill="#ff8000"/>
<rect x="267" y="246" width="1" height="38" fill="#ff8000"/>
<rect x="268" y="249" width="1" height="35" fill="#ff8000"/>
<rect x="270" y="254" width="1" height="30" fill="#ff8000"/>
<rect x="272" y="249" width="1" height="35" fill="#ff8000"/>
<rect x="273" y="255" width="1" height="29" fill="#ff8000"/>
<rect x="274" y="251" width="1" height="33" fill="#ff8000"/>
<rect x="277" y="251" width="1" height="33" fill="#ff8000"/>
<rect x="278" y="254" width="1" height="30" fill="#ff8000"/>
<rect x="279" y="245" width="1" height="39" fill="#ff8000"/>
<rect x="280" y="256" width="1" height="28" fill="#ff8000"/>
<rect x="282" y="255" width="1" height="29" fill="#ff8000"/>
<rect x="283" y="259" width="1" height="25" fill="#ff8000"/>
<rect x="284" y="255" width="1" height="29" fill="#ff8000"/>
<rect x="286" y="274" width="1" height="10" fill="#ff8000"/>
<rect x="288" y="243" width="1" height="11" fill="#ff8000"/>
<rect x="288" y="254" width="1" height="30" fill="#7d9d7d"/>
<rect x="292" y="252" width="1" height="32" fill="#ff8000"/>
<rect x="293" y="259" width="1" height="25" fill="#ff8000"/>
<rect x="296" y="274" width="1" height="10" fill="#ff8000"/>
<rect x="298" y="246" width="1" height="38" fill="#ff8000"/>
<rect x="300" y="250" width="1" height="34" fill="#ff8000"/>
<rect x="302" y="268" width="1" height="16" fill="#ff8000"/>
<rect x="303" y="257" width="1" height="27" fill="#ff8000"/>
<rect x="304" y="252" width="1" height="32" fill="#ff8000"/>
<rect x="308" y="243" width="1" height="41" fill="#ff8000"/>
<rect x="309" y="254" width="1" height="30" fill="#ff8000"/>
<rect x="310" y="244" width="1" height="40" fill="#ff8000"/>
<rect x="312" y="260" width="1" height="24" fill="#ff8000"/>
<rect x="314" y="246" width="1" height="38" fill="#ff8000"/>
<rect x="319" y="247" width="1" height="37" fill="#ff8000"/>
<rect x="320" y="257" width="1" height="27" fill="#ff8000"/>
<rect x="322" y="265" width="1" height="19" fill="#ff8000"/>
<rect x="324" y="247" width="1" height="37" fill="#ff8000"/>
<rect x="325" y="274" width="1" height="10" fill="#ff8000"/>
<rect x="326" y="254" width="1" height="30" fill="#ff8000"/>
<rect x="328" y="268" width="1" height="16" fill="#ff8000"/>
<rect x="329" y="256" width="1" height="28" fill="#ff8000"/>
<rect x="330" y="251" width="1" height="33" fill="#ff8000"/>
<rect x="332" y="255" width="1" height="29" fill="#ff8000"/>
<rect x="334" y="253" width="1" height="31" fill="#ff8000"/>
<rect x="335" y="249" width="1" height="35" fill="#ff8000"/>
<rect x="338" y="252" width="1" height="32" fill="#ff8000"/>
<rect x="339" y="267" width="1" height="17" fill="#ff8000"/>
<rect x="340" y="238" width="1" height="46" fill="#ff8000"/>
<rect x="341" y="256" width="1" height="28" fill="#ff8000"/>
<rect x="342" y="238" width="1" height="46" fill="#ff8000"/>
<rect x="344" y="252" width="1" height="32" fill="#ff8000"/>
<rect x="346" y="251" width="1" height="33" fill="#ff8000"/>
<rect x="348" y="255" width="1" height="29" fill="#ff8000"/>
<rect x="350" y="249" width="1" height="35" fill="#ff8000"/>
<rect x="351" y="265" width="1" height="19" fill="#ff8000"/>
<rect x="354" y="249" width="1" height="35" fill="#ff8000"/>
<rect x="355" y="254" width="1" height="30" fill="#ff8000"/>
<rect x="356" y="248" width="1" height="36" fill="#ff8000"/>
<rect x="358" y="251" width="1" height="33" fill="#ff8000"/>
<rect x="359" y="250" width="1" height="34" fill="#ff8000"/>
<rect x="360" y="256" width="1" height="28" fill="#ff8000"/>
<rect x="361" y="247" width="1" height="37" fill="#ff8000"/>
<rect x="362" y="249" width="1" height="35" fill="#ff8000"/>
<rect x="364" y="245" width="1" height="39" fill="#ff8000"/>
<rect x="365" y="254" width="1" height="30" fill="#ff8000"/>
<rect x="366" y="245" width="1" height="39" fill="#ff8000"/>
<rect x="367" y="258" width="1" height="26" fill="#ff8000"/>
<rect x="368" y="252" width="1" height="32" fill="#ff8000"/>
<rect x="370" y="245" width="1" height="39" fill="#ff8000"/>
<rect x="372" y="258" width="1" height="26" fill="#ff8000"/>
<rect x="374" y="250" width="1" height="34" fill="#ff8000"/>
<rect x="375" y="257" width="1" height="27" fill="#ff8000"/>
<rect x="376" y="274" width="1" height="10" fill="#ff8000"/>
<rect x="377" y="251" width="1" height="33" fill="#ff8000"/>
<rect x="378" y="255" width="1" height="29" fill="#ff8000"/>
<rect x="380" y="252" width="1" height="32" fill="#ff8000"/>
<rect x="382" y="252" width="1" height="32" fill="#ff8000"/>
<rect x="383" y="250" width="1" height="34" fill="#ff8000"/>
<rect x="385" y="256" width="1" height="28" fill="#ff8000"/>
<rect x="387" y="252" width="1" height="32" fill="#ff8000"/>
<rect x="388" y="256" width="1" height="28" fill="#ff8000"/>
<rect x="390" y="252" width="1" height="32" fill="#ff8000"/>
<rect x="391" y="255" width="1" height="29" fill="#ff8000"/>
<rect x="392" y="247" width="1" height="37" fill="#ff8000"/>
<rect x="394" y="243" width="1" height="41" fill="#ff8000"/>
<rect x="396" y="257" width="1" height="27" fill="#ff8000"/>
<rect x="397" y="231" width="1" height="53" fill="#ff8000"/>
<rect x="398" y="248" width="1" height="36" fill="#ff8000"/>
<rect x="401" y="257" width="1" height="27" fill="#ff8000"/>
<rect x="402" y="250" width="1" height="34" fill="#ff8000"/>
<rect x="403" y="252" width="1" height="32" fill="#ff8000"/>
<rect x="406" y="257" width="1" height="27" fill="#ff8000"/>
<rect x="408" y="263" width="1" height="21" fill="#ff8000"/>
<rect x="411" y="258" width="1" height="26" fill="#ff8000"/>
<rect x="414" y="250" width="1" height="34" fill="#ff8000"/>
<rect x="416" y="252" width="1" height="32" fill="#ff8000"/>
<rect x="419" y="259" width="1" height="25" fill="#ff8000"/>
<rect x="421" y="268" width="1" height="16" fill="#ff8000"/>
<rect x="422" y="248" width="1" height="36" fill="#ff8000"/>
<rect x="424" y="247" width="1" height="37" fill="#ff8000"/>
<rect x="426" y="248" width="1" height="36" fill="#ff8000"/>
<rect x="427" y="247" width="1" height="37" fill="#ff8000"/>
<rect x="430" y="250" width="1" height="34" fill="#ff8000"/>
<rect x="432" y="237" width="1" height="47" fill="#ff8000"/>
<rect x="434" y="245" width="1" height="39" fill="#ff8000"/>
<rect x="435" y="256" width="1" height="28" fill="#ff8000"/>
<rect x="437" y="243" width="1" height="41" fill="#ff8000"/>
<rect x="440" y="251" width="1" height="33" fill="#ff8000"/>
<rect x="441" y="274" width="1" height="10" fill="#ff8000"/>
<rect x="70" y="284" width="3" height="1" fill="#000"/>
<rect x="70" y="267" width="3" height="1" fill="#000"/>
<rect x="70" y="249" width="3" height="1" fill="#000"/>
<rect x="70" y="231" width="3" height="1" fill="#000"/>
<rect x="70" y="214" width="3" height="1" fill="#000"/>
<rect x="70" y="196" width="3" height="1" fill="#000"/>
<rect x="70" y="178" width="3" height="1" fill="#000"/>
<rect x="82" y="286" width="1" height="2" fill="#000"/>
<rect x="112" y="286" width="1" height="2" fill="#000"/>
<rect x="142" y="286" width="1" height="2" fill="#000"/>
<rect x="172" y="286" width="1" height="2" fill="#000"/>
<rect x="202" y="286" width="1" height="2" fill="#000"/>
<rect x="232" y="286" width="1" height="2" fill="#000"/>
<rect x="262" y="286" width="1" height="2" fill="#000"/>
<rect x="292" y="286" width="1" height="2" fill="#000"/>
<rect x="322" y="286" width="1" height="2" fill="#000"/>
<rect x="352" y="286" width="1" height="2" fill="#000"/>
<rect x="382" y="286" width="1" height="2" fill="#000"/>
<rect x="412" y="286" width="1" height="2" fill="#000"/>
<rect x="442" y="286" width="1" height="2" fill="#000"/>
</svg>
<div class="ax" style="left:74.500px;top:153px;letter-spacing:.1px">KB/<span style="font-family:'WenQuanYi Zen Hei',sans-serif;font-weight:normal;font-size:12px;margin-left:-2.3px;position:relative;top:0px;letter-spacing:0">秒</span></div>
<div class="ax" style="left:20px;width:50px;text-align:right;top:171px;">1000000</div>
<div class="ax" style="left:20px;width:50px;text-align:right;top:189px;">100000</div>
<div class="ax" style="left:20px;width:50px;text-align:right;top:207px;">10000</div>
<div class="ax" style="left:20px;width:50px;text-align:right;top:225px;">1000</div>
<div class="ax" style="left:20px;width:50px;text-align:right;top:243px;">100</div>
<div class="ax" style="left:20px;width:50px;text-align:right;top:261px;">10</div>
<div class="ax" style="left:20px;width:50px;text-align:right;top:278px;">1</div>
<div class="ax" style="left:61.5px;width:40px;text-align:center;top:288px;">6:00</div>
<div class="ax" style="left:91.5px;width:40px;text-align:center;top:288px;">5:30</div>
<div class="ax" style="left:121.5px;width:40px;text-align:center;top:288px;">5:00</div>
<div class="ax" style="left:151.5px;width:40px;text-align:center;top:288px;">4:30</div>
<div class="ax" style="left:181.5px;width:40px;text-align:center;top:288px;">4:00</div>
<div class="ax" style="left:211.5px;width:40px;text-align:center;top:288px;">3:30</div>
<div class="ax" style="left:241.5px;width:40px;text-align:center;top:288px;">3:00</div>
<div class="ax" style="left:271.5px;width:40px;text-align:center;top:288px;">2:30</div>
<div class="ax" style="left:301.5px;width:40px;text-align:center;top:288px;">2:00</div>
<div class="ax" style="left:331.5px;width:40px;text-align:center;top:288px;">1:30</div>
<div class="ax" style="left:361.5px;width:40px;text-align:center;top:288px;">1:00</div>
<div class="ax" style="left:391.5px;width:40px;text-align:center;top:288px;">0:30</div>
<div class="ax" style="left:421.5px;width:40px;text-align:center;top:288px;">0:00</div>

<!-- ============ inner tab control ============ -->
<div class="abs" style="left:25px;top:322px;width:418px;height:150px;box-sizing:border-box;border:1px solid #8b8f95;background:#fff;"></div>
<div class="tab" style="left:76px;top:305px;width:47px;height:17px;"></div>
<div class="tab" style="left:123px;top:305px;width:48px;height:17px;"></div>
<div class="tab" style="left:171px;top:305px;width:46px;height:17px;"></div>
<div class="abs" style="left:25px;top:303px;width:52px;height:19px;box-sizing:border-box;border:1px solid #8b8f95;border-bottom:none;background:#fff;"></div>
<div class="abs cjk" style="left:32px;top:306px;">块大小</div>
<div class="abs cjk" style="left:81px;top:308px;">位置</div>
<div class="abs cjk" style="left:128px;top:308px;">程序</div>
<div class="abs cjk" style="left:176px;top:308px;">统计</div>
<!-- combo -->
<div class="abs" style="left:27px;top:323px;width:412px;height:19px;box-sizing:border-box;border:1px solid #6c6c6c;border-radius:3px;background:linear-gradient(#f2f2f2 0,#ebebeb 48%,#dddddd 52%,#cfcfcf 100%);box-shadow:inset 0 0 0 1px #fcfcfc;"></div>
<div class="abs mono" style="left:28.500px;top:327px;letter-spacing:-.9px;font-size:11.5px;text-shadow:none">I/O <span style="margin-left:1px;letter-spacing:0;font-size:12px;text-shadow:0 0 0 rgba(0,0,0,.85)">操作计数</span></div>
<svg class="abs" style="left:427px;top:332px" width="7" height="4"><polygon points="0,0 7,0 3.500,4" fill="#000"/></svg>

<!-- ============ chart 2 ============ -->
<svg class="abs" style="left:0;top:0" width="688" height="585" shape-rendering="crispEdges">
<defs><linearGradient id="c2bg" x1="0" y1="0" x2="0" y2="1"><stop offset="0" stop-color="#000"/><stop offset="1" stop-color="#444"/></linearGradient><linearGradient id="gb" x1="0" y1="0" x2="0" y2="1"><stop offset="0" stop-color="#075e80"/><stop offset="1" stop-color="#00bfff"/></linearGradient><linearGradient id="go" x1="0" y1="0" x2="0" y2="1"><stop offset="0" stop-color="#804000"/><stop offset="1" stop-color="#ff8000"/></linearGradient></defs>
<rect x="64" y="349" width="375" height="100" fill="url(#c2bg)"/>
<rect x="64" y="447" width="375" height="2" fill="#000"/>
<rect x="64" y="349" width="2" height="100" fill="#000"/>
<rect x="66" y="442" width="373" height="1" fill="#3a3a3a"/>
<rect x="66" y="437" width="373" height="1" fill="#707070"/>
<rect x="66" y="432" width="373" height="1" fill="#3a3a3a"/>
<rect x="66" y="427" width="373" height="1" fill="#707070"/>
<rect x="66" y="423" width="373" height="1" fill="#3a3a3a"/>
<rect x="66" y="418" width="373" height="1" fill="#707070"/>
<rect x="66" y="413" width="373" height="1" fill="#3a3a3a"/>
<rect x="66" y="408" width="373" height="1" fill="#707070"/>
<rect x="66" y="403" width="373" height="1" fill="#3a3a3a"/>
<rect x="66" y="399" width="373" height="1" fill="#707070"/>
<rect x="66" y="394" width="373" height="1" fill="#3a3a3a"/>
<rect x="66" y="389" width="373" height="1" fill="#707070"/>
<rect x="66" y="384" width="373" height="1" fill="#3a3a3a"/>
<rect x="66" y="379" width="373" height="1" fill="#707070"/>
<rect x="66" y="375" width="373" height="1" fill="#3a3a3a"/>
<rect x="66" y="370" width="373" height="1" fill="#707070"/>
<rect x="66" y="365" width="373" height="1" fill="#3a3a3a"/>
<rect x="66" y="360" width="373" height="1" fill="#707070"/>
<rect x="66" y="355" width="373" height="1" fill="#3a3a3a"/>
<rect x="66" y="351" width="373" height="1" fill="#707070"/>
<rect x="82" y="352" width="1" height="101" fill="#707070"/>
<rect x="115" y="352" width="1" height="101" fill="#707070"/>
<rect x="149" y="352" width="1" height="101" fill="#707070"/>
<rect x="183" y="352" width="1" height="101" fill="#707070"/>
<rect x="217" y="352" width="1" height="101" fill="#707070"/>
<rect x="251" y="352" width="1" height="101" fill="#707070"/>
<rect x="285" y="352" width="1" height="101" fill="#707070"/>
<rect x="319" y="352" width="1" height="101" fill="#707070"/>
<rect x="387" y="352" width="1" height="101" fill="#707070"/>
<rect x="421" y="352" width="1" height="101" fill="#707070"/>
<rect x="73" y="426" width="9" height="21" fill="url(#gb)"/>
<rect x="81" y="426" width="1" height="21" fill="#05506e" fill-opacity=".55"/>
<rect x="73" y="426" width="1" height="21" fill="#19c3ff"/>
<rect x="73" y="426" width="8" height="1" fill="#19c3ff"/>
<rect x="74" y="446" width="8" height="1" fill="#05506e" fill-opacity=".45"/>
<rect x="82" y="442" width="9" height="5" fill="url(#go)"/>
<rect x="90" y="442" width="1" height="5" fill="#6e3600" fill-opacity=".55"/>
<rect x="82" y="442" width="1" height="5" fill="#ff8a10"/>
<rect x="82" y="442" width="8" height="1" fill="#ff8a10"/>
<rect x="83" y="446" width="8" height="1" fill="#6e3600" fill-opacity=".45"/>
<rect x="106" y="445" width="9" height="2" fill="url(#gb)"/>
<rect x="114" y="445" width="1" height="2" fill="#05506e" fill-opacity=".55"/>
<rect x="106" y="445" width="1" height="2" fill="#19c3ff"/>
<rect x="106" y="445" width="8" height="1" fill="#19c3ff"/>
<rect x="107" y="446" width="8" height="1" fill="#05506e" fill-opacity=".45"/>
<rect x="174" y="415" width="9" height="32" fill="url(#gb)"/>
<rect x="182" y="415" width="1" height="32" fill="#05506e" fill-opacity=".55"/>
<rect x="174" y="415" width="1" height="32" fill="#19c3ff"/>
<rect x="174" y="415" width="8" height="1" fill="#19c3ff"/>
<rect x="175" y="446" width="8" height="1" fill="#05506e" fill-opacity=".45"/>
<rect x="183" y="384" width="9" height="63" fill="url(#go)"/>
<rect x="191" y="384" width="1" height="63" fill="#6e3600" fill-opacity=".55"/>
<rect x="183" y="384" width="1" height="63" fill="#ff8a10"/>
<rect x="183" y="384" width="8" height="1" fill="#ff8a10"/>
<rect x="184" y="446" width="8" height="1" fill="#6e3600" fill-opacity=".45"/>
<rect x="208" y="437" width="9" height="10" fill="url(#gb)"/>
<rect x="216" y="437" width="1" height="10" fill="#05506e" fill-opacity=".55"/>
<rect x="208" y="437" width="1" height="10" fill="#19c3ff"/>
<rect x="208" y="437" width="8" height="1" fill="#19c3ff"/>
<rect x="209" y="446" width="8" height="1" fill="#05506e" fill-opacity=".45"/>
<rect x="217" y="442" width="9" height="5" fill="url(#go)"/>
<rect x="225" y="442" width="1" height="5" fill="#6e3600" fill-opacity=".55"/>
<rect x="217" y="442" width="1" height="5" fill="#ff8a10"/>
<rect x="217" y="442" width="8" height="1" fill="#ff8a10"/>
<rect x="218" y="446" width="8" height="1" fill="#6e3600" fill-opacity=".45"/>
<rect x="242" y="443" width="9" height="4" fill="url(#gb)"/>
<rect x="250" y="443" width="1" height="4" fill="#05506e" fill-opacity=".55"/>
<rect x="242" y="443" width="1" height="4" fill="#19c3ff"/>
<rect x="242" y="443" width="8" height="1" fill="#19c3ff"/>
<rect x="243" y="446" width="8" height="1" fill="#05506e" fill-opacity=".45"/>
<rect x="251" y="445" width="9" height="2" fill="url(#go)"/>
<rect x="259" y="445" width="1" height="2" fill="#6e3600" fill-opacity=".55"/>
<rect x="251" y="445" width="1" height="2" fill="#ff8a10"/>
<rect x="251" y="445" width="8" height="1" fill="#ff8a10"/>
<rect x="252" y="446" width="8" height="1" fill="#6e3600" fill-opacity=".45"/>
<rect x="276" y="445" width="9" height="2" fill="url(#gb)"/>
<rect x="284" y="445" width="1" height="2" fill="#05506e" fill-opacity=".55"/>
<rect x="276" y="445" width="1" height="2" fill="#19c3ff"/>
<rect x="276" y="445" width="8" height="1" fill="#19c3ff"/>
<rect x="277" y="446" width="8" height="1" fill="#05506e" fill-opacity=".45"/>
<rect x="285" y="446" width="9" height="1" fill="#6e3600"/>
<rect x="310" y="445" width="9" height="2" fill="url(#gb)"/>
<rect x="318" y="445" width="1" height="2" fill="#05506e" fill-opacity=".55"/>
<rect x="310" y="445" width="1" height="2" fill="#19c3ff"/>
<rect x="310" y="445" width="8" height="1" fill="#19c3ff"/>
<rect x="311" y="446" width="8" height="1" fill="#05506e" fill-opacity=".45"/>
<rect x="319" y="446" width="9" height="1" fill="#6e3600"/>
<rect x="378" y="354" width="9" height="93" fill="url(#gb)"/>
<rect x="386" y="354" width="1" height="93" fill="#05506e" fill-opacity=".55"/>
<rect x="378" y="354" width="1" height="93" fill="#19c3ff"/>
<rect x="378" y="354" width="8" height="1" fill="#19c3ff"/>
<rect x="379" y="446" width="8" height="1" fill="#05506e" fill-opacity=".45"/>
<rect x="387" y="356" width="9" height="91" fill="url(#go)"/>
<rect x="395" y="356" width="1" height="91" fill="#6e3600" fill-opacity=".55"/>
<rect x="387" y="356" width="1" height="91" fill="#ff8a10"/>
<rect x="387" y="356" width="8" height="1" fill="#ff8a10"/>
<rect x="388" y="446" width="8" height="1" fill="#6e3600" fill-opacity=".45"/>
<rect x="412" y="443" width="9" height="4" fill="url(#gb)"/>
<rect x="420" y="443" width="1" height="4" fill="#05506e" fill-opacity=".55"/>
<rect x="412" y="443" width="1" height="4" fill="#19c3ff"/>
<rect x="412" y="443" width="8" height="1" fill="#19c3ff"/>
<rect x="413" y="446" width="8" height="1" fill="#05506e" fill-opacity=".45"/>
<rect x="421" y="441" width="9" height="6" fill="url(#go)"/>
<rect x="429" y="441" width="1" height="6" fill="#6e3600" fill-opacity=".55"/>
<rect x="421" y="441" width="1" height="6" fill="#ff8a10"/>
<rect x="421" y="441" width="8" height="1" fill="#ff8a10"/>
<rect x="422" y="446" width="8" height="1" fill="#6e3600" fill-opacity=".45"/>
</svg>
<div class="ax2" style="left:26px;width:35px;text-align:right;top:346px;">100%</div>
<div class="ax2" style="left:26px;width:35px;text-align:right;top:355px;">90%</div>
<div class="ax2" style="left:26px;width:35px;text-align:right;top:365px;">80%</div>
<div class="ax2" style="left:26px;width:35px;text-align:right;top:374px;">70%</div>
<div class="ax2" style="left:26px;width:35px;text-align:right;top:384px;">60%</div>
<div class="ax2" style="left:26px;width:35px;text-align:right;top:394px;">50%</div>
<div class="ax2" style="left:26px;width:35px;text-align:right;top:403px;">40%</div>
<div class="ax2" style="left:26px;width:35px;text-align:right;top:413px;">30%</div>
<div class="ax2" style="left:26px;width:35px;text-align:right;top:422px;">20%</div>
<div class="ax2" style="left:26px;width:35px;text-align:right;top:432px;">10%</div>
<div class="ax2" style="left:62.5px;width:40px;text-align:center;top:454px;">0.5K</div>
<div class="ax2" style="left:96px;width:40px;text-align:center;top:454px;">1K</div>
<div class="ax2" style="left:129.5px;width:40px;text-align:center;top:454px;">2K</div>
<div class="ax2" style="left:163.5px;width:40px;text-align:center;top:454px;">4K</div>
<div class="ax2" style="left:197.5px;width:40px;text-align:center;top:454px;">8K</div>
<div class="ax2" style="left:231.5px;width:40px;text-align:center;top:454px;">16K</div>
<div class="ax2" style="left:265.5px;width:40px;text-align:center;top:454px;">32K</div>
<div class="ax2" style="left:299.5px;width:40px;text-align:center;top:454px;">64K</div>
<div class="ax2" style="left:367px;width:40px;text-align:center;top:454px;">&lt;=64K</div>
<div class="ax2" style="left:400.500px;width:40px;text-align:center;top:454px;letter-spacing:-.2px">&gt;64K</div>

<!-- ============ right panel ============ -->
<div class="abs" style="left:479px;top:146px;width:73px;height:19px;box-sizing:border-box;border:1px solid #3c7fb1;border-radius:3px;background:linear-gradient(#edf4f9 0,#dfe9f1 48%,#cadeeb 52%,#c1d9e8 100%);box-shadow:inset 0 0 0 1px #52d4f7;"></div>
<div class="abs cjk" style="left:503px;top:148px;">停止</div>

<div class="grp" style="left:457px;top:183px;width:111px;height:113px;"></div>
<div class="abs cjk" style="left:464px;top:176px;background:#fff;padding:0 2px;">读取</div>
<div class="lab" style="left:463px;top:197px;">速度<span style="margin-left:2px">:</span></div>
<div class="val" style="left:456px;width:100px;top:209px;">0 KB/<b>秒</b></div>
<div class="lab" style="left:463px;top:221px;">最高<span style="margin-left:2px">:</span></div>
<div class="val" style="left:456px;width:100px;top:233px;">61.9 MB/<b>秒</b></div>
<div class="abs mono" style="left:463px;top:245px;letter-spacing:-.9px;font-size:11.5px">I/O:</div>
<div class="val" style="left:456px;width:100px;top:255px;">0/<b>秒</b></div>
<div class="lab" style="left:463px;top:267px;">总计<span style="margin-left:2px">:</span></div>
<div class="val" style="left:456px;width:100px;top:279px;padding-right:1px;">1 MB</div>

<div class="grp" style="left:457px;top:310px;width:111px;height:113px;"></div>
<div class="abs cjk" style="left:464px;top:303px;background:#fff;padding:0 2px;">写入</div>
<div class="lab" style="left:463px;top:324px;">速度<span style="margin-left:2px">:</span></div>
<div class="val" style="left:456px;width:100px;top:335px;">4 KB/<b>秒</b></div>
<div class="lab" style="left:463px;top:348px;">最高<span style="margin-left:2px">:</span></div>
<div class="val" style="left:456px;width:100px;top:359px;">198 MB/<b>秒</b></div>
<div class="abs mono" style="left:463px;top:373px;letter-spacing:-.9px;font-size:11.5px">I/O:</div>
<div class="val" style="left:456px;width:100px;top:384px;">2/<b>秒</b></div>
<div class="lab" style="left:463px;top:396px;">总计<span style="margin-left:2px">:</span></div>
<div class="val" style="left:456px;width:100px;top:407px;padding-right:1px;">508 MB</div>

<div class="lab" style="left:463px;top:436px;">用时<span style="margin-left:2px">:</span></div>
<div class="val" style="left:456px;width:100px;top:436px;">0:23:16</div>

</body>
</html>
